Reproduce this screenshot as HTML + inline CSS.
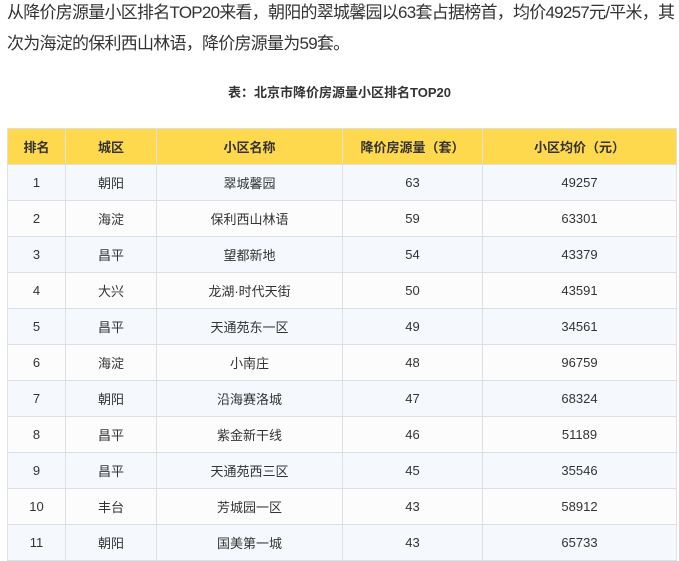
<!DOCTYPE html><html><head><meta charset="utf-8"><style>
body{margin:0;background:#fff;width:679px;height:557px;overflow:hidden;font-family:"Liberation Sans","Noto Sans CJK SC",sans-serif;color:#333}
p{margin:0;position:absolute;left:7px;top:-3px;width:680px;font-size:17px;line-height:31px;letter-spacing:-0.75px;white-space:nowrap}
.cap{position:absolute;top:82px;left:0;width:679px;text-align:center;font-size:13px;font-weight:bold;color:#333}
table{position:absolute;left:7px;top:128px;border-collapse:collapse;width:670px;font-size:13px}
td,th{border:1px solid #dcdfe3;text-align:center;height:35px;padding:0}
th{background:#fed84d;font-weight:bold;color:#333}
tr:nth-child(even) td{background:#f5f8fd}
tr:nth-child(odd) td{background:#fcfcfc}
</style></head><body>
<p>从降价房源量小区排名TOP20来看，朝阳的翠城馨园以63套占据榜首，均价49257元/平米，其<br>次为海淀的保利西山林语，降价房源量为59套。</p>
<div class="cap">表：北京市降价房源量小区排名TOP20</div>
<table>
<tr><th style="width:57px">排名</th><th style="width:90px">城区</th><th style="width:185px">小区名称</th><th style="width:139px">降价房源量（套）</th><th>小区均价（元）</th></tr>
<tr><td>1</td><td>朝阳</td><td>翠城馨园</td><td>63</td><td>49257</td></tr>
<tr><td>2</td><td>海淀</td><td>保利西山林语</td><td>59</td><td>63301</td></tr>
<tr><td>3</td><td>昌平</td><td>望都新地</td><td>54</td><td>43379</td></tr>
<tr><td>4</td><td>大兴</td><td>龙湖·时代天街</td><td>50</td><td>43591</td></tr>
<tr><td>5</td><td>昌平</td><td>天通苑东一区</td><td>49</td><td>34561</td></tr>
<tr><td>6</td><td>海淀</td><td>小南庄</td><td>48</td><td>96759</td></tr>
<tr><td>7</td><td>朝阳</td><td>沿海赛洛城</td><td>47</td><td>68324</td></tr>
<tr><td>8</td><td>昌平</td><td>紫金新干线</td><td>46</td><td>51189</td></tr>
<tr><td>9</td><td>昌平</td><td>天通苑西三区</td><td>45</td><td>35546</td></tr>
<tr><td>10</td><td>丰台</td><td>芳城园一区</td><td>43</td><td>58912</td></tr>
<tr><td>11</td><td>朝阳</td><td>国美第一城</td><td>43</td><td>65733</td></tr>
</table>
</body></html>
